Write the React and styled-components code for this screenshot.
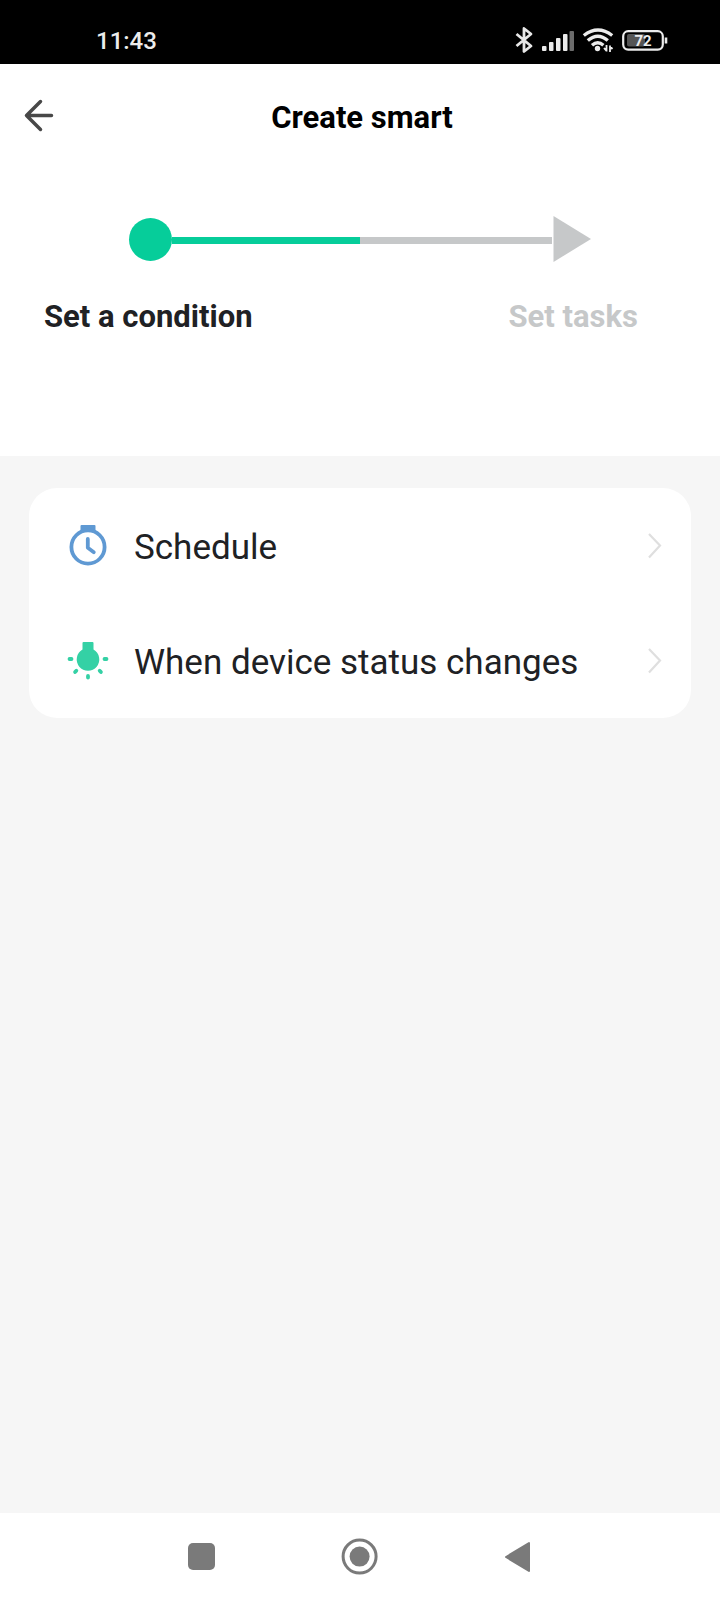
import React from 'react'
import styled, { createGlobalStyle } from 'styled-components'

const steps = [
  { label: 'Set a condition', active: true },
  { label: 'Set tasks', active: false },
]

const App = () => {
  return (
    <Page>
      <GlobalStyle />
      <StatusBar>
        <time>11:43</time>
        <StatusIcons>
          <BluetoothIcon />
          <SignalIcon />
          <WifiIcon />
          <BatteryIcon level={72} />
        </StatusIcons>
      </StatusBar>

      <Header>
        <BackButton type="button" aria-label="Back">
          <svg width="30" height="34" viewBox="0 0 30 34">
            <path d="M16.5 2.5 2.5 16.500l14 14M2.5 16.500h25" />
          </svg>
        </BackButton>
        <h1>Create smart</h1>
      </Header>

      <Stepper>
        <Track>
          <TrackHalf>
            <Dot />
            <Line $active />
          </TrackHalf>
          <TrackHalf>
            <Line />
            <svg width="39" height="46" viewBox="0 0 39 46">
              <path d="M1.5 0 39 23 1.5 46z" fill="#c6c8c9" />
            </svg>
          </TrackHalf>
        </Track>
        <StepLabels>
          {steps.map(({ label, active }) => (
            <StepLabel key={label} $active={active}>
              {label}
            </StepLabel>
          ))}
        </StepLabels>
      </Stepper>

      <Content>
        <Card>
          <Row type="button">
            <ClockIcon />
            <span>Schedule</span>
            <Chevron />
          </Row>
          <Row type="button">
            <BulbIcon />
            <span>When device status changes</span>
            <Chevron />
          </Row>
        </Card>
      </Content>

      <NavBar>
        <NavButton type="button" aria-label="Recent apps">
          <svg width="38" height="38" viewBox="0 0 38 38">
            <rect x="5" y="5" width="27" height="27" rx="5" fill="#7a7a7a" />
          </svg>
        </NavButton>
        <NavButton type="button" aria-label="Home">
          <svg width="38" height="38" viewBox="0 0 38 38">
            <circle cx="18.6" cy="18.6" r="16.5" fill="none" stroke="#7a7a7a" strokeWidth="3" />
            <circle cx="18.6" cy="18.6" r="10" fill="#7a7a7a" />
          </svg>
        </NavButton>
        <NavButton type="button" aria-label="Back">
          <svg width="38" height="38" viewBox="0 0 38 38">
            <path
              d="M7 19 30 5v28z"
              fill="#7a7a7a"
              stroke="#7a7a7a"
              strokeWidth="2"
              strokeLinejoin="round"
            />
          </svg>
        </NavButton>
      </NavBar>
    </Page>
  )
}

const BluetoothIcon = () => (
  <svg width="20" height="28" viewBox="0 0 20 28" fill="none" stroke="#e8e8e8" strokeWidth="2.8">
    <path d="M2.5 8 17 20l-7 5.5v-23L17 8 2.5 20" strokeLinejoin="round" />
  </svg>
)

const SignalIcon = () => (
  <svg width="34" height="28" viewBox="0 0 34 28" fill="#ececec">
    <rect x="1" y="20" width="4.5" height="5" rx="1" />
    <rect x="8" y="16" width="4.5" height="9" rx="1" />
    <rect x="15" y="12" width="4.5" height="13" rx="1" />
    <rect x="22" y="8" width="4.5" height="17" rx="1" />
    <rect x="28.5" y="5" width="4.5" height="20" rx="1" fill="#6c6c6c" />
  </svg>
)

const WifiIcon = () => (
  <svg width="32" height="28" viewBox="0 0 32 28" fill="none" stroke="#ececec" strokeWidth="3.4">
    <path d="M1.8 9.5Q16-1.5 30.2 9.5" />
    <path d="M5.8 14.5q10-8.5 20 0" />
    <path d="M10 19.3q5.8-5 11.4 0" />
    <circle cx="15.5" cy="22.5" r="2.7" fill="#ececec" stroke="none" />
    <path d="M24.500 19v6.500M22 22l2.500 2.800M28 26v-6.500M28 20.500l2.500 2.500" strokeWidth="1.8" />
  </svg>
)

const BatteryIcon = ({ level }) => (
  <svg width="48" height="28" viewBox="0 0 48 28">
    <rect x="2.2" y="5.2" width="39.6" height="18.4" rx="5" fill="none" stroke="#ececec" strokeWidth="2.2" />
    <rect x="6" y="8" width="18" height="12.500" rx="2" fill="#555" />
    <path d="M45 11.5v6" stroke="#ececec" strokeWidth="2.6" />
    <BatteryText x="22" y="20">{level}</BatteryText>
  </svg>
)

const ClockIcon = () => (
  <svg width="42" height="42" viewBox="0 0 42 42" fill="none" stroke="#5f99d3">
    <path d="M13.5 7V1q0-1 1-1h13q1 0 1 1v6z" fill="#5f99d3" stroke="none" />
    <circle cx="21" cy="22" r="16.6" strokeWidth="3.8" />
    <path d="M20.8 14v8.8l6 4.4" strokeWidth="3.8" strokeLinecap="round" strokeLinejoin="round" />
  </svg>
)

const BulbIcon = () => (
  <svg width="42" height="42" viewBox="0 0 42 42" fill="#34d1a5">
    <path d="M15.500 3q0-1 1-1h9q1 0 1 1v6.600a11.300 11.300 0 1 1-11 0z" />
    <path
      d="M2.500 19h2M37.500 19h2M9.300 30.700l-1.200 1.300M32.700 30.700l1.200 1.300M21 36v1.500"
      stroke="#34d1a5"
      strokeWidth="3.800"
      strokeLinecap="round"
    />
  </svg>
)

const Chevron = () => (
  <svg width="16" height="28" viewBox="0 0 16 28" fill="none" stroke="#dfdfdf" strokeWidth="2.2">
    <path d="M2 2l11 11.500L2 25.500" />
  </svg>
)

const GlobalStyle = createGlobalStyle`
  * {
    box-sizing: border-box;
  }
  body {
    margin: 0;
    font-family: Roboto, sans-serif;
    background: #f6f6f6;
  }
  button {
    font: inherit;
    color: inherit;
    background: transparent;
    border: none;
    padding: 0;
    cursor: pointer;
  }
  svg {
    display: block;
    flex-shrink: 0;
  }
`

const Page = styled.div`
  display: flex;
  flex-direction: column;
  min-height: 100vh;
  color: #202124;
`

const StatusBar = styled.div`
  display: flex;
  justify-content: space-between;
  align-items: center;
  height: 64px;
  padding: 16px 51px 0 96px;
  background: #000;
  color: #ececec;
  font-size: 24px;
  font-weight: 500;
  time {
    padding-top: 2px;
  }
`

const StatusIcons = styled.div`
  display: flex;
  align-items: center;
  gap: 7px;
`

const BatteryText = styled.text`
  font-size: 15px;
  font-weight: 700;
  text-anchor: middle;
  fill: #ececec;
`

const Header = styled.header`
  display: grid;
  grid-template-columns: 84px 1fr 80px;
  align-items: center;
  height: 104px;
  background: #fff;
  h1 {
    margin: 0;
    padding-top: 4px;
    font-size: 31px;
    line-height: 40px;
    font-weight: 700;
    text-align: center;
    color: #000;
  }
`

const BackButton = styled.button`
  justify-self: start;
  margin-left: 24px;
  svg {
    fill: none;
    stroke: #484848;
    stroke-width: 3.5px;
    stroke-linecap: round;
    stroke-linejoin: round;
  }
`

const Stepper = styled.section`
  height: 288px;
  padding-top: 48px;
  background: #fff;
`

const Track = styled.div`
  display: flex;
  margin: 0 129px;
`

const TrackHalf = styled.div`
  display: flex;
  align-items: center;
  flex: 1;
  height: 46px;
`

const Dot = styled.span`
  width: 43px;
  height: 43px;
  border-radius: 50%;
  background: #06cd9a;
`

const Line = styled.span`
  flex: 1;
  height: 7px;
  margin-top: 2px;
  background: ${({ $active }) => ($active ? '#06cd9a' : '#c6c8c9')};
`

const StepLabels = styled.div`
  display: flex;
  justify-content: space-between;
  margin-top: 35px;
  padding: 0 82px 0 44px;
`

const StepLabel = styled.span`
  font-size: 31px;
  line-height: 40px;
  font-weight: 700;
  color: ${({ $active }) => ($active ? '#202124' : '#c6c8c9')};
`

const Content = styled.main`
  flex: 1;
  padding: 32px 29px;
  background: #f6f6f6;
`

const Card = styled.div`
  border-radius: 28px;
  background: #fff;
`

const Row = styled.button`
  display: flex;
  align-items: center;
  width: 100%;
  height: 115px;
  padding: 0 28px 0 38px;
  text-align: left;
  font-size: 35px;
  span {
    flex: 1;
    margin-left: 25px;
    padding-top: 3px;
  }
`

const NavBar = styled.nav`
  display: flex;
  justify-content: center;
  gap: 120px;
  height: 87px;
  background: #fff;
`

const NavButton = styled.button`
  display: flex;
  align-items: center;
`

export default App
